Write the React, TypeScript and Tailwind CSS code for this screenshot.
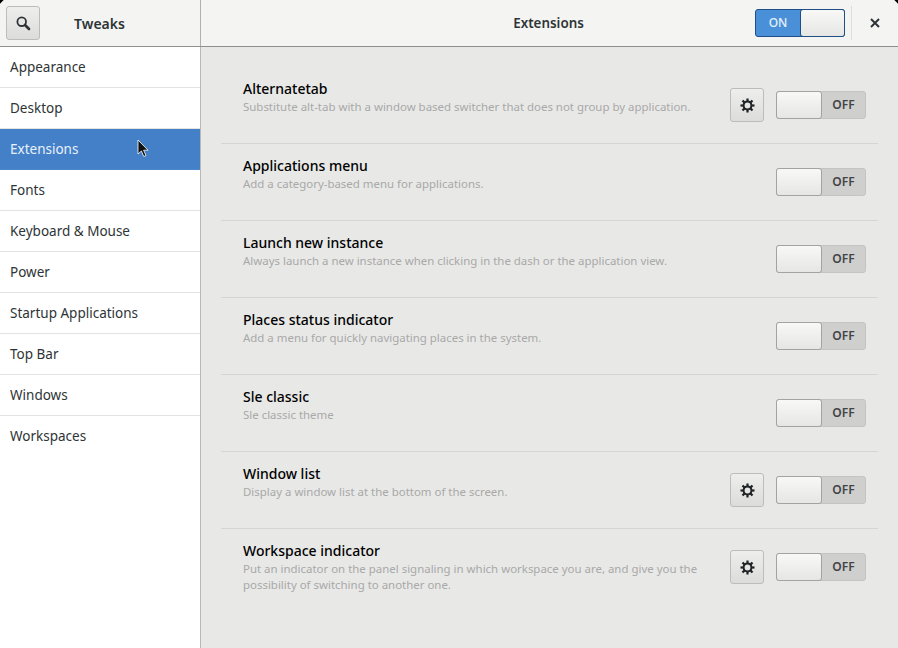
const FONT = "font-['Noto_Sans',sans-serif]";

const NAV = ['Appearance', 'Desktop', 'Extensions', 'Fonts', 'Keyboard & Mouse', 'Power', 'Startup Applications', 'Top Bar', 'Windows', 'Workspaces'];

const EXTENSIONS = [
  { name: 'Alternatetab', desc: ['Substitute alt-tab with a window based switcher that does not group by application.'], gear: true },
  { name: 'Applications menu', desc: ['Add a category-based menu for applications.'], gear: false },
  { name: 'Launch new instance', desc: ['Always launch a new instance when clicking in the dash or the application view.'], gear: false },
  { name: 'Places status indicator', desc: ['Add a menu for quickly navigating places in the system.'], gear: false },
  { name: 'Sle classic', desc: ['Sle classic theme'], gear: false },
  { name: 'Window list', desc: ['Display a window list at the bottom of the screen.'], gear: true },
  { name: 'Workspace indicator', desc: ['Put an indicator on the panel signaling in which workspace you are, and give you the', 'possibility of switching to another one.'], gear: true },
];

function GearIcon() {
  return (
    <svg width="15" height="15" viewBox="0 0 15 15" fill="none">
      <circle cx="7.5" cy="7.5" r="3.9" stroke="#1f2325" strokeWidth="2" />
      <g stroke="#1f2325" strokeWidth="2.2">
        <path d="M7.5 0.5V3.4" />
        <path d="M7.5 11.6V14.5" />
        <path d="M0.5 7.5H3.4" />
        <path d="M11.6 7.5H14.5" />
        <path d="M2.5 2.5L4.6 4.6" />
        <path d="M10.4 10.4L12.5 12.5" />
        <path d="M12.5 2.5L10.4 4.6" />
        <path d="M4.6 10.4L2.5 12.5" />
      </g>
    </svg>
  );
}

function OffSwitch() {
  return (
    <div className="flex h-[28px] w-[90px] items-center rounded-[3px] border border-[#c4c4c2] bg-[#cfcfcd]">
      <div className="-my-px -ml-px h-[28px] w-[46px] rounded-[3px] border border-[#a3a3a1] bg-gradient-to-b from-[#f8f8f7] to-[#e6e6e4]" />
      <span className="flex-1 text-center text-[12px] font-semibold leading-none text-[#3f4446]">OFF</span>
    </div>
  );
}

export default function App() {
  return (
    <div className={`${FONT} relative flex h-[648px] w-[898px] flex-col overflow-hidden bg-[#e8e8e7]`}>
      {/* Header */}
      <header className="flex h-[47px] shrink-0 border-b border-[#8f8f8d] bg-[#f4f4f3]">
        <div className="flex w-[201px] shrink-0 items-center border-r border-[#b0b0ae] pl-[6px]">
          <button className="flex h-[34px] w-[34px] items-center justify-center rounded-[3px] border border-[#bcbcba] bg-gradient-to-b from-[#eeeeed] to-[#dcdcda]">
            <svg width="16" height="16" viewBox="0 0 16 16" fill="none" stroke="#2e3436" strokeWidth="1.8">
              <circle cx="6.7" cy="6.7" r="4.3" />
              <path d="M10 10L14 14" strokeWidth="2.6" strokeLinecap="round" />
            </svg>
          </button>
          <span className="flex-1 pt-[2px] pr-[41px] text-center text-[14px] font-semibold leading-none text-[#2e3436]">Tweaks</span>
        </div>
        <div className="flex flex-1 items-center">
          <span className="flex-1 pt-[2px] pl-[141px] text-center text-[13.4px] font-semibold leading-none text-[#2e3436]">Extensions</span>
          <div className="flex h-[28px] w-[90px] items-center rounded-[3px] border border-[#1f4f86] bg-[#4a90d9]">
            <span className="w-[44px] text-center text-[12px] font-medium leading-none text-[#e6f0fb]">ON</span>
            <div className="-my-px -mr-px h-[28px] flex-1 rounded-[3px] border border-[#1f4f86] bg-gradient-to-b from-[#f8f8f7] to-[#e6e6e4]" />
          </div>
          <div className="ml-[6px] h-[34px] w-px bg-[#dcdcda]" />
          <button className="flex w-[46px] items-center justify-center">
            <svg width="10" height="10" viewBox="0 0 10 10" stroke="#2e3436" strokeWidth="2">
              <path d="M1 1L9 9M9 1L1 9" />
            </svg>
          </button>
        </div>
      </header>

      <div className="flex min-h-0 flex-1">
        {/* Sidebar */}
        <nav className="w-[201px] shrink-0 border-r border-[#b9b9b7] bg-white">
          {NAV.map((item, i) => (
            <div
              key={item}
              className={`h-[41px] border-b pt-[9px] pl-[10px] text-[13.5px] leading-[22px] ${
                item === 'Extensions'
                  ? 'border-[#4a86cb] bg-[#4480c7] text-[#e8f1fb]'
                  : i === NAV.length - 1
                    ? 'border-transparent text-[#2e3436]'
                    : 'border-[#e3e3e2] text-[#2e3436]'
              }`}
            >
              {item}
            </div>
          ))}
        </nav>

        {/* Extension list */}
        <main className="flex-1 px-[20px] pt-[20px]">
          {EXTENSIONS.map((ext, i) => (
            <div key={ext.name} className={`flex h-[77px] border-b pr-[12px] ${i < EXTENSIONS.length - 1 ? 'border-[#d5d5d3]' : 'border-transparent'}`}>
              <div className="min-w-0 flex-1 pt-[13px] pl-[22px]">
                <div className="mb-px text-[14px] font-medium leading-[18px] text-black">{ext.name}</div>
                {ext.desc.map((line) => (
                  <div key={line} className="text-[11.45px] leading-[16px] text-[#a9a9a8]">{line}</div>
                ))}
              </div>
              <div className="flex items-center">
                {ext.gear && (
                  <button className="mr-[12px] flex h-[34px] w-[34px] items-center justify-center rounded-[3px] border border-[#bcbcba] bg-gradient-to-b from-[#eeeeed] to-[#dcdcda]">
                    <GearIcon />
                  </button>
                )}
                <OffSwitch />
              </div>
            </div>
          ))}
        </main>
      </div>

      {/* Window corners */}
      <div className="absolute -left-[5px] -top-[5px] h-[8px] w-[8px] rotate-45 bg-black" />
      <div className="absolute -right-[5px] -top-[5px] h-[8px] w-[8px] rotate-45 bg-black" />

      {/* Pointer */}
      <svg className="absolute left-[137px] top-[139px]" width="13" height="20" viewBox="0 0 13 20">
        <path d="M1 1V15L4.4 12L6.8 17.5L9 16.5L6.6 11.2H11Z" fill="#111" stroke="#fff" strokeWidth="0.8" />
      </svg>
    </div>
  );
}
